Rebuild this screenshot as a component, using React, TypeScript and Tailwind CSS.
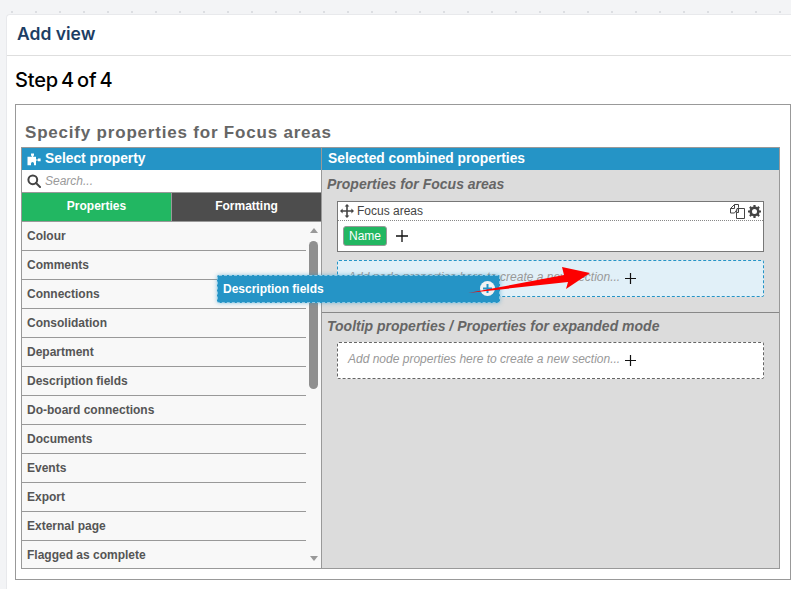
import React from "react";

const items = ["Colour","Comments","Connections","Consolidation","Department","Description fields","Do-board connections","Documents","Events","Export","External page","Flagged as complete"];
const arial = "font-['Liberation_Sans',Arial,sans-serif]";

function Puzzle() {
  return (
    <svg width="14" height="13" viewBox="0 0 14 13" fill="currentColor">
      <path d="M4 0.5h3v2.2H6.2v1.1H9V6.5h2V5.6h2.6v2.6H11v-.7H9v4.8H7V10.5a1.5 1.5 0 0 0-3 0v1.8H.5V3.8H4.8V2.7H4z" />
    </svg>
  );
}

function SearchIcon() {
  return (
    <svg width="14" height="14" viewBox="0 0 14 14" fill="none" stroke="#444" strokeWidth="2">
      <circle cx="5.8" cy="5.8" r="4.4" />
      <path d="M9 9l4 4" strokeLinecap="round" />
    </svg>
  );
}

function Move() {
  return (
    <svg width="14" height="14" viewBox="0 0 14 14" fill="#444">
      <path d="M7 0l2.4 2.6H7.8v3.6h3.6V4.6L14 7l-2.6 2.4V7.8H7.8v3.6h1.6L7 14l-2.4-2.6h1.6V7.8H2.6v1.6L0 7l2.6-2.4v1.6h3.6V2.6H4.6z" />
    </svg>
  );
}

function Copy() {
  return (
    <svg width="15" height="15" viewBox="0 0 15 15" fill="white" stroke="#444" strokeWidth="1">
      <path d="M4.5.5h4v3l-4 5.5h-4v-4.500z" />
      <path d="M4.500.5v4h-4" fill="none" />
      <path d="M7 4.500h7.500v10h-8V8.500z" />
      <path d="M8.500 4.500v4h-2" fill="none" />
    </svg>
  );
}

function Gear() {
  return (
    <svg width="13" height="13" viewBox="0 0 13 13">
      <circle cx="6.500" cy="6.500" r="3.800" fill="none" stroke="#444" strokeWidth="2.600" />
      <path d="M6.500 0v13M0 6.500h13M1.900 1.900l9.200 9.200M11.100 1.900l-9.200 9.200" stroke="#444" strokeWidth="2.200" strokeDasharray="2.500 8 2.500 0" />
    </svg>
  );
}

function Plus({ size = 11 }: { size?: number }) {
  return (
    <svg width={size} height={size} viewBox="0 0 11 11" stroke="#111" strokeWidth="1.200">
      <path d="M5.500 0v11M0 5.500h11" />
    </svg>
  );
}

function DropZone({ active }: { active?: boolean }) {
  return (
    <div className={`mx-[15px] h-[37px] pl-[10px] flex items-center gap-[5px] border border-dashed rounded-[2px] ${active ? "bg-[#e1f0f8] border-[#2594c6]" : "bg-white border-[#666]"}`}>
      <span className="text-[12px] italic text-[#999] pb-[3px]">Add node properties here to create a new section...</span>
      <Plus />
    </div>
  );
}

export default function App() {
  return (
    <div className="relative w-[791px] h-[589px] overflow-hidden bg-[#f3f4f6] bg-[radial-gradient(#dcdee2_1px,transparent_1px)] bg-[size:24px_24px] pl-[6px] pt-[14px]">
      <div className="h-[575px] bg-white rounded-tl-[4px] border-l border-t border-[#e8e9ec]">
        <div className="h-[41px] border-b border-[#dedede] flex items-center pl-[10px] pb-[2px]">
          <h1 className="font-['Inter',sans-serif] text-[17.5px] font-semibold text-[#1c3d63]">Add view</h1>
        </div>
        <div className="pl-[8px]">
          <h2 className="h-[48px] flex items-center font-['Inter',sans-serif] text-[20px] font-medium text-black tracking-[-0.2px] [word-spacing:-2px]">Step 4 of 4</h2>
          <div className={`w-[776px] h-[476px] border border-[#999] px-[5px] flex flex-col ${arial}`}>
            <div className="h-[42px] pt-[18px] pl-[4px] text-[17px] leading-[20px] font-bold text-[#666] tracking-[0.8px]">Specify properties for Focus areas</div>
            <div className="w-[759px] h-[422px] border-x border-b border-[#999] flex">
              <div className="w-[299px] flex flex-col shrink-0">
                <div className="h-[23px] bg-[#2594c6] border-t border-[#999] text-white text-[13.8px] font-bold flex items-center gap-[4px] pl-[5px]">
                  <Puzzle />
                  <span>Select property</span>
                </div>
                <div className="h-[23px] flex items-center gap-[4px] pl-[5px] bg-white border-b border-[#999]">
                  <SearchIcon />
                  <span className="text-[12px] italic text-[#999]">Search...</span>
                </div>
                <div className="h-[29px] flex border-b border-[#999] text-white text-[12px] font-bold">
                  <div className="w-[150px] bg-[#22b762] border-r border-[#999] flex items-center justify-center pb-[2px]">Properties</div>
                  <div className="flex-1 bg-[#4d4d4d] flex items-center justify-center pb-[2px]">Formatting</div>
                </div>
                <div className="flex-1 flex bg-[#f8f8f8] overflow-hidden">
                  <div className="w-[284px] shrink-0">
                    {items.map((t, i) => (
                      <div key={t} className={`flex items-center pl-[5px] text-[12px] font-bold text-[#555] ${i < items.length - 1 ? "h-[29px] border-b border-[#999]" : "h-[27px]"}`}>{t}</div>
                    ))}
                  </div>
                  <div className="flex-1 flex flex-col items-center pt-[6px]">
                    <div className="w-0 h-0 border-x-[4.500px] border-x-transparent border-b-[5px] border-b-[#999]" />
                    <div className="w-[9px] h-[148px] mt-[8px] rounded-full bg-[#8f8f8f]" />
                    <div className="flex-1" />
                    <div className="w-0 h-0 mb-[7px] border-x-[4.500px] border-x-transparent border-t-[5px] border-t-[#999]" />
                  </div>
                </div>
              </div>
              <div className="flex-1 border-l border-[#999] flex flex-col bg-[#dcdcdc]">
                <div className="h-[23px] bg-[#2594c6] border-t border-[#999] text-white text-[13.8px] font-bold flex items-center pl-[6px]">Selected combined properties</div>
                <div className="h-[143px] border-b border-[#888] flex flex-col">
                  <div className="h-[31px] pl-[5px] pb-[2px] flex items-center text-[14px] font-bold italic text-[#666]">Properties for Focus areas</div>
                  <div className="mx-[15px] h-[51px] border border-[#777] bg-white">
                    <div className="h-[19px] flex items-center border-b border-dotted border-[#888] pl-[2px] pr-[2px] gap-[3px]">
                      <Move />
                      <span className="text-[12px] text-[#444]">Focus areas</span>
                      <div className="flex-1" />
                      <Copy />
                      <Gear />
                    </div>
                    <div className="flex items-center pl-[5px] pt-[5px] gap-[9px]">
                      <span className="h-[20px] px-[5px] rounded-[3px] bg-[#22b762] border border-[#999] text-white text-[12px] flex items-center">Name</span>
                      <Plus size={12} />
                    </div>
                  </div>
                  <div className="h-[8px]" />
                  <DropZone active />
                </div>
                <div className="h-[29px] pl-[5px] pb-[2px] flex items-center text-[14px] font-bold italic text-[#666]">Tooltip properties / Properties for expanded mode</div>
                <DropZone />
              </div>
            </div>
          </div>
        </div>
      </div>

      <div className={`absolute left-[217px] top-[275px] w-[283px] h-[28px] bg-[#2594c6] border border-dashed border-[#8cc8e4] rounded-[2px] shadow-[0_0_4px_rgba(37,148,198,0.5)] flex items-center pl-[5px] text-white text-[12px] font-bold ${arial}`}>
        Description fields
      </div>
      <div className="absolute left-[480px] top-[281px] w-[15px] h-[15px] rounded-full bg-[#f2f2f2] flex items-center justify-center">
        <svg width="9" height="9" viewBox="0 0 9 9" stroke="#2594c6" strokeWidth="2"><path d="M4.500 0v9M0 4.500h9" /></svg>
      </div>
      <svg className="absolute left-[465px] top-[264px]" width="130" height="34" viewBox="0 0 130 34">
        <path d="M3 29L99 11L97 3L125 9L101 25L103 18Z" fill="#fd0000" />
      </svg>
    </div>
  );
}
